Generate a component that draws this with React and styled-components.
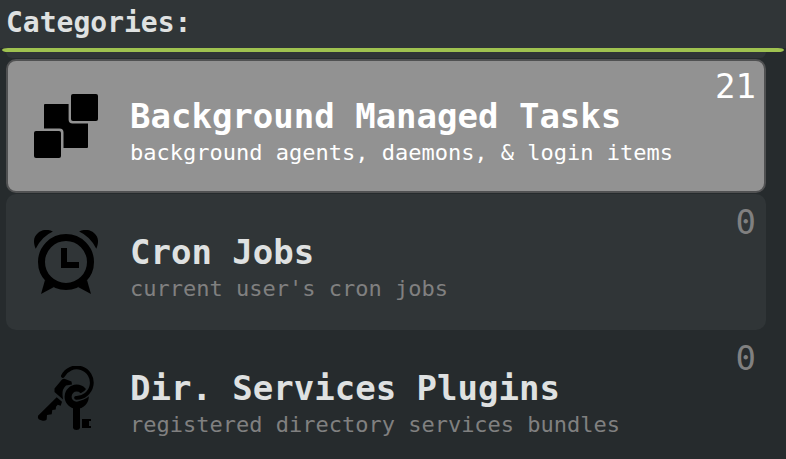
import React, { useState } from "react";
import styled, { createGlobalStyle } from "styled-components";

const GlobalStyle = createGlobalStyle`
  * {
    box-sizing: border-box;
  }

  body {
    margin: 0;
    background-color: #262b2d;
    font-family: "DejaVu Sans Mono", monospace;
  }
`;

const TasksIcon = () => (
  <svg viewBox="0 0 64 64" aria-hidden="true">
    <rect x="37" y="0" width="27" height="27" rx="2" />
    <rect x="0" y="37" width="27" height="27" rx="2" />
    <path d="M11 10H34.6V25.5Q34.6 29.5 38.6 29.5H54V53Q54 54 53 54H29.5V38.5Q29.5 34.5 25.5 34.5H10V11Q10 10 11 10Z" />
  </svg>
);

const ClockIcon = () => (
  <svg viewBox="0 0 64 64" aria-hidden="true">
    <circle cx="32" cy="32" r="24.5" fill="none" stroke="#000" strokeWidth="7" />
    <path d="M27 18H33V32H45V38H27Z" />
    <path d="M1.7 18.7C-1.2 12 -.4 6.5 4 3C8 -.6 14 -1 18.9 1.4Q7.5 6.5 1.7 18.7Z" />
    <path d="M62.3 18.7C65.2 12 64.4 6.5 60 3C56 -.6 50 -1 45.1 1.4Q56.5 6.5 62.3 18.7Z" />
    <path d="M11 50L7 64L20 57Z" />
    <path d="M53 50L57 64L44 57Z" />
  </svg>
);

const KeysIcon = () => (
  <svg viewBox="0 0 64 64" aria-hidden="true">
    <mask id="ring-gap" maskUnits="userSpaceOnUse" x="0" y="0" width="64" height="64">
      <rect width="64" height="64" fill="#fff" />
      <path
        d="M57.6 18A15.2 15.2 0 0 1 42.5 31.6"
        fill="none"
        stroke="#000"
        strokeWidth="7"
        strokeLinecap="round"
      />
    </mask>
    <path
      d="M28.9 10A15.2 15.2 0 1 1 42 31.8"
      fill="none"
      stroke="#000"
      strokeWidth="3.8"
      strokeLinecap="round"
    />
    <g mask="url(#ring-gap)">
      <circle cx="42.7" cy="30.7" r="8.6" fill="none" stroke="#000" strokeWidth="7" />
    </g>
    <path d="M39 40H46V62Q45.5 64 42.5 64Q39.5 64 39 62Z" />
    <path d="M48 53H57V55H55V60H57V62H48Z" />
    <path d="M28 13.5Q29.5 12.5 31 13L37.5 15.5L38 18.5L32 19.5Q28 23 28.5 29L29 33.5L20.5 26V22.5Z" />
    <path d="M22.7 31.3L28 35.7L26.7 39.7L23.7 38.7L22 40.7L21.7 43.5L18.3 44L17.7 48.3L13 49L12.7 53.5Q11 55.3 8.7 54.7L5 53.5Q3.4 52 4 49.7Z" />
  </svg>
);

const CATEGORIES = [
  {
    id: "btm",
    name: "Background Managed Tasks",
    description: "background agents, daemons, & login items",
    count: 21,
    Icon: TasksIcon,
  },
  {
    id: "cron",
    name: "Cron Jobs",
    description: "current user's cron jobs",
    count: 0,
    Icon: ClockIcon,
  },
  {
    id: "dirServices",
    name: "Dir. Services Plugins",
    description: "registered directory services bundles",
    count: 0,
    Icon: KeysIcon,
  },
];

const App = () => {
  const [selected, setSelected] = useState("btm");

  return (
    <Panel>
      <GlobalStyle />
      <Header>
        <Title>Categories:</Title>
      </Header>
      <Divider />
      <List>
        {CATEGORIES.map(({ id, name, description, count, Icon }) => (
          <Item key={id}>
            <Row
              type="button"
              $selected={id === selected}
              aria-pressed={id === selected}
              onClick={() => setSelected(id)}
            >
              <IconBox>
                <Icon />
              </IconBox>
              <Details>
                <Name $selected={id === selected}>{name}</Name>
                <Description>{description}</Description>
              </Details>
              <Count>{count}</Count>
            </Row>
          </Item>
        ))}
      </List>
    </Panel>
  );
};

const Panel = styled.main`
  display: flex;
  flex-direction: column;
  height: 100vh;
  overflow: hidden;
`;

const Header = styled.header`
  flex: none;
  padding: 5px 6px 7px;
  background-color: #303537;
`;

const Title = styled.h1`
  margin: 0;
  color: #dfe1e1;
  font-size: 28px;
  line-height: 36px;
`;

const Divider = styled.div`
  flex: none;
  height: 4px;
  margin: 0 2px;
  border-radius: 6px / 2px;
  background-color: #9fc250;
`;

const List = styled.ul`
  flex: 1;
  min-height: 0;
  margin: 0;
  padding: 0 20px 0 6px;
  list-style: none;
  overflow-y: auto;
  scrollbar-width: none;

  /* tail of the stripe above the first row */
  &::before {
    content: "";
    display: block;
    height: 6px;
    border-radius: 0 0 10px 10px;
    background-color: #303537;
  }
`;

const Item = styled.li`
  border-radius: 10px;

  &:nth-child(even) {
    background-color: #303537;
  }
`;

const Row = styled.button`
  display: flex;
  align-items: flex-start;
  width: 100%;
  height: 136px;
  padding: 34px 8px 0 26px;
  border: 2px solid transparent;
  border-radius: 10px;
  background-color: transparent;
  color: #808080;
  font-family: inherit;
  text-align: left;
  cursor: pointer;

  ${({ $selected }) =>
    $selected &&
    `
    height: 134px;
    margin: 1px 0;
    padding-top: 33px;
    border-color: #505152;
    background-color: #929292;
    color: #ffffff;
  `}
`;

const IconBox = styled.span`
  flex: none;
  width: 64px;
  height: 64px;

  svg {
    display: block;
    width: 100%;
    height: 100%;
    fill: #000000;
  }
`;

const Details = styled.span`
  flex: 1;
  min-width: 0;
  margin-left: 32px;
  white-space: nowrap;
`;

const Name = styled.span`
  display: block;
  color: ${({ $selected }) => ($selected ? "#ffffff" : "#dfe1e1")};
  font-size: 34px;
  font-weight: bold;
  line-height: 44px;
`;

const Description = styled.span`
  display: block;
  font-size: 22px;
  line-height: 30px;
`;

const Count = styled.span`
  flex: none;
  margin-top: -28px;
  font-size: 34px;
  line-height: 40px;
`;

export default App;
